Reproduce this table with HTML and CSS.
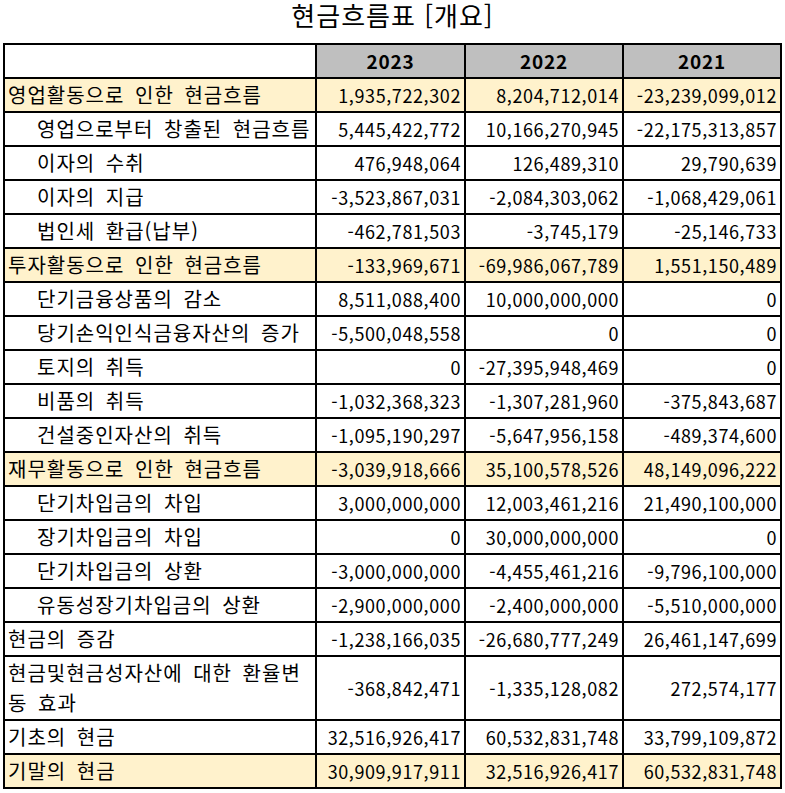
FILE: index.html
```html
<!DOCTYPE html>
<html lang="ko">
<head>
<meta charset="utf-8">
<title>현금흐름표 [개요]</title>
<link rel="stylesheet" href="styles.css">
</head>
<body>
<h1 class="title">현금흐름표 [개요]</h1>
<table class="cf">
  <colgroup>
    <col class="c-label"><col class="c-num"><col class="c-num2"><col class="c-num2">
  </colgroup>
  <thead>
    <tr><th class="blank"></th><th>2023</th><th>2022</th><th>2021</th></tr>
  </thead>
  <tbody>
    <tr class="hl"><td class="lbl">영업활동으로 인한 현금흐름</td><td>1,935,722,302</td><td>8,204,712,014</td><td>-23,239,099,012</td></tr>
    <tr><td class="lbl sub">영업으로부터 창출된 현금흐름</td><td>5,445,422,772</td><td>10,166,270,945</td><td>-22,175,313,857</td></tr>
    <tr><td class="lbl sub">이자의 수취</td><td>476,948,064</td><td>126,489,310</td><td>29,790,639</td></tr>
    <tr><td class="lbl sub">이자의 지급</td><td>-3,523,867,031</td><td>-2,084,303,062</td><td>-1,068,429,061</td></tr>
    <tr><td class="lbl sub">법인세 환급(납부)</td><td>-462,781,503</td><td>-3,745,179</td><td>-25,146,733</td></tr>
    <tr class="hl"><td class="lbl">투자활동으로 인한 현금흐름</td><td>-133,969,671</td><td>-69,986,067,789</td><td>1,551,150,489</td></tr>
    <tr><td class="lbl sub">단기금융상품의 감소</td><td>8,511,088,400</td><td>10,000,000,000</td><td>0</td></tr>
    <tr><td class="lbl sub">당기손익인식금융자산의 증가</td><td>-5,500,048,558</td><td>0</td><td>0</td></tr>
    <tr><td class="lbl sub">토지의 취득</td><td>0</td><td>-27,395,948,469</td><td>0</td></tr>
    <tr><td class="lbl sub">비품의 취득</td><td>-1,032,368,323</td><td>-1,307,281,960</td><td>-375,843,687</td></tr>
    <tr><td class="lbl sub">건설중인자산의 취득</td><td>-1,095,190,297</td><td>-5,647,956,158</td><td>-489,374,600</td></tr>
    <tr class="hl"><td class="lbl">재무활동으로 인한 현금흐름</td><td>-3,039,918,666</td><td>35,100,578,526</td><td>48,149,096,222</td></tr>
    <tr><td class="lbl sub">단기차입금의 차입</td><td>3,000,000,000</td><td>12,003,461,216</td><td>21,490,100,000</td></tr>
    <tr><td class="lbl sub">장기차입금의 차입</td><td>0</td><td>30,000,000,000</td><td>0</td></tr>
    <tr><td class="lbl sub">단기차입금의 상환</td><td>-3,000,000,000</td><td>-4,455,461,216</td><td>-9,796,100,000</td></tr>
    <tr><td class="lbl sub">유동성장기차입금의 상환</td><td>-2,900,000,000</td><td>-2,400,000,000</td><td>-5,510,000,000</td></tr>
    <tr><td class="lbl">현금의 증감</td><td>-1,238,166,035</td><td>-26,680,777,249</td><td>26,461,147,699</td></tr>
    <tr><td class="lbl">현금및현금성자산에 대한 환율변<br>동 효과</td><td>-368,842,471</td><td>-1,335,128,082</td><td>272,574,177</td></tr>
    <tr><td class="lbl">기초의 현금</td><td>32,516,926,417</td><td>60,532,831,748</td><td>33,799,109,872</td></tr>
    <tr class="hl"><td class="lbl">기말의 현금</td><td>30,909,917,911</td><td>32,516,926,417</td><td>60,532,831,748</td></tr>
  </tbody>
</table>
</body>
</html>
```
FILE: styles.css
```css
* { box-sizing: border-box; }
html, body { margin: 0; padding: 0; background: #fff; }
body {
  padding: 0 3px;
  font-family: "Noto Sans CJK KR", "Noto Sans", sans-serif;
  color: #000;
}
.title {
  margin: 0;
  height: 43px;
  line-height: 30px;
  font-size: 26px;
  font-weight: 400;
  text-align: center;
  letter-spacing: 1px;
}
.cf {
  border-collapse: collapse;
  table-layout: fixed;
  width: 779px;
  font-size: 18px;
  letter-spacing: 0.6px;
}
.c-label { width: 312px; }
.c-num { width: 149px; }
.c-num2 { width: 158px; }
.cf th, .cf td {
  border: 2px solid #000;
  line-height: 30px;
  padding: 1px 3px 1px 3px;
  white-space: nowrap;
}
.cf th {
  background: #bfbfbf;
  font-size: 19px;
  font-weight: 700;
  text-align: center;
  letter-spacing: 0.8px;
}
.cf th.blank { background: #fff; }
.cf td { text-align: right; }
.cf td.lbl {
  text-align: left;
  font-size: 20px;
  letter-spacing: 1px;
  word-spacing: 4px;
  font-feature-settings: "palt";
}
.cf td.sub { padding-left: 32px; }
.cf tr.hl td { background: #fff2cc; }
```
